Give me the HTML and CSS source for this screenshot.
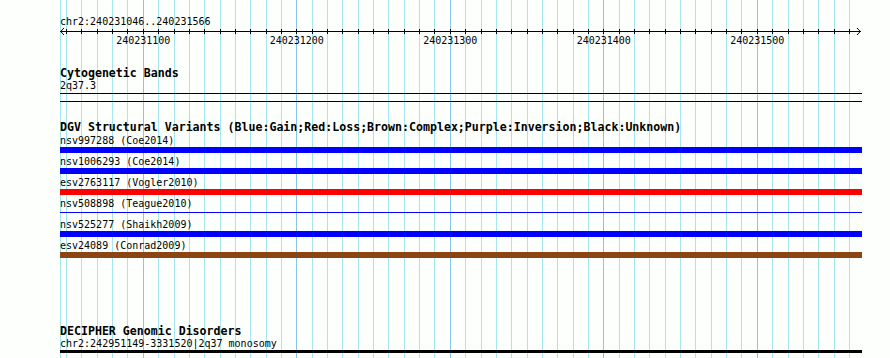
FILE: index.html
```html
<!DOCTYPE html>
<html lang="en">
<head>
    <meta charset="UTF-8">
    <title>Genome browser - chr2:240231046..240231566</title>
    <link rel="stylesheet" href="styles.css">
</head>
<body>
    <div class="panel">
        <!-- grid: a line every 10 bp, darker every 100 bp -->
        <svg class="grid" width="890" height="358" shape-rendering="crispEdges">
            <line class="minor" x1="60.5" x2="60.5" y1="0" y2="358"/>
            <line class="minor" x1="66.55" x2="66.55" y1="0" y2="358"/>
            <line class="minor" x1="81.9" x2="81.9" y1="0" y2="358"/>
            <line class="minor" x1="97.25" x2="97.25" y1="0" y2="358"/>
            <line class="minor" x1="112.6" x2="112.6" y1="0" y2="358"/>
            <line class="minor" x1="127.95" x2="127.95" y1="0" y2="358"/>
            <line class="major" x1="143.3" x2="143.3" y1="0" y2="358"/>
            <line class="minor" x1="158.65" x2="158.65" y1="0" y2="358"/>
            <line class="minor" x1="174" x2="174" y1="0" y2="358"/>
            <line class="minor" x1="189.35" x2="189.35" y1="0" y2="358"/>
            <line class="minor" x1="204.7" x2="204.7" y1="0" y2="358"/>
            <line class="minor" x1="220.05" x2="220.05" y1="0" y2="358"/>
            <line class="minor" x1="235.4" x2="235.4" y1="0" y2="358"/>
            <line class="minor" x1="250.75" x2="250.75" y1="0" y2="358"/>
            <line class="minor" x1="266.1" x2="266.1" y1="0" y2="358"/>
            <line class="minor" x1="281.45" x2="281.45" y1="0" y2="358"/>
            <line class="major" x1="296.8" x2="296.8" y1="0" y2="358"/>
            <line class="minor" x1="312.15" x2="312.15" y1="0" y2="358"/>
            <line class="minor" x1="327.5" x2="327.5" y1="0" y2="358"/>
            <line class="minor" x1="342.85" x2="342.85" y1="0" y2="358"/>
            <line class="minor" x1="358.2" x2="358.2" y1="0" y2="358"/>
            <line class="minor" x1="373.55" x2="373.55" y1="0" y2="358"/>
            <line class="minor" x1="388.9" x2="388.9" y1="0" y2="358"/>
            <line class="minor" x1="404.25" x2="404.25" y1="0" y2="358"/>
            <line class="minor" x1="419.6" x2="419.6" y1="0" y2="358"/>
            <line class="minor" x1="434.95" x2="434.95" y1="0" y2="358"/>
            <line class="major" x1="450.3" x2="450.3" y1="0" y2="358"/>
            <line class="minor" x1="465.65" x2="465.65" y1="0" y2="358"/>
            <line class="minor" x1="481" x2="481" y1="0" y2="358"/>
            <line class="minor" x1="496.35" x2="496.35" y1="0" y2="358"/>
            <line class="minor" x1="511.7" x2="511.7" y1="0" y2="358"/>
            <line class="minor" x1="527.05" x2="527.05" y1="0" y2="358"/>
            <line class="minor" x1="542.4" x2="542.4" y1="0" y2="358"/>
            <line class="minor" x1="557.75" x2="557.75" y1="0" y2="358"/>
            <line class="minor" x1="573.1" x2="573.1" y1="0" y2="358"/>
            <line class="minor" x1="588.45" x2="588.45" y1="0" y2="358"/>
            <line class="major" x1="603.8" x2="603.8" y1="0" y2="358"/>
            <line class="minor" x1="619.15" x2="619.15" y1="0" y2="358"/>
            <line class="minor" x1="634.5" x2="634.5" y1="0" y2="358"/>
            <line class="minor" x1="649.85" x2="649.85" y1="0" y2="358"/>
            <line class="minor" x1="665.2" x2="665.2" y1="0" y2="358"/>
            <line class="minor" x1="680.55" x2="680.55" y1="0" y2="358"/>
            <line class="minor" x1="695.9" x2="695.9" y1="0" y2="358"/>
            <line class="minor" x1="711.25" x2="711.25" y1="0" y2="358"/>
            <line class="minor" x1="726.6" x2="726.6" y1="0" y2="358"/>
            <line class="minor" x1="741.95" x2="741.95" y1="0" y2="358"/>
            <line class="major" x1="757.3" x2="757.3" y1="0" y2="358"/>
            <line class="minor" x1="772.65" x2="772.65" y1="0" y2="358"/>
            <line class="minor" x1="788" x2="788" y1="0" y2="358"/>
            <line class="minor" x1="803.35" x2="803.35" y1="0" y2="358"/>
            <line class="minor" x1="818.7" x2="818.7" y1="0" y2="358"/>
            <line class="minor" x1="834.05" x2="834.05" y1="0" y2="358"/>
            <line class="minor" x1="849.4" x2="849.4" y1="0" y2="358"/>
        </svg>

        <div class="tracks">
            <div class="label">chr2:240231046..240231566</div>

            <svg class="ruler" width="802" height="20" viewBox="60 28 802 20">
                <path class="axis" shape-rendering="crispEdges" d="M60 31.5H861"/>
                <path class="axis" d="M64 28L60.7 31.5L64 35M857 28L860.3 31.5L857 35"/>
                <path class="axis" shape-rendering="crispEdges" d="M66.55 29V34M81.9 29V34M97.25 29V34M112.6 29V34M127.95 29V34M143.3 29V34M158.65 29V34M174 29V34M189.35 29V34M204.7 29V34M220.05 29V34M235.4 29V34M250.75 29V34M266.1 29V34M281.45 29V34M296.8 29V34M312.15 29V34M327.5 29V34M342.85 29V34M358.2 29V34M373.55 29V34M388.9 29V34M404.25 29V34M419.6 29V34M434.95 29V34M450.3 29V34M465.65 29V34M481 29V34M496.35 29V34M511.7 29V34M527.05 29V34M542.4 29V34M557.75 29V34M573.1 29V34M588.45 29V34M603.8 29V34M619.15 29V34M634.5 29V34M649.85 29V34M665.2 29V34M680.55 29V34M695.9 29V34M711.25 29V34M726.6 29V34M741.95 29V34M757.3 29V34M772.65 29V34M788 29V34M803.35 29V34M818.7 29V34M834.05 29V34M849.4 29V34"/>
                <text class="tick-label" x="143.3" y="44">240231100</text>
                <text class="tick-label" x="296.8" y="44">240231200</text>
                <text class="tick-label" x="450.3" y="44">240231300</text>
                <text class="tick-label" x="603.8" y="44">240231400</text>
                <text class="tick-label" x="757.3" y="44">240231500</text>
            </svg>

            <section class="track cyto">
                <div class="title">Cytogenetic Bands</div>
                <div class="label">2q37.3</div>
                <div class="band"></div>
            </section>

            <section class="track dgv">
                <div class="title">DGV Structural Variants (Blue:Gain;Red:Loss;Brown:Complex;Purple:Inversion;Black:Unknown)</div>
                <div class="features">
                    <div class="feature">
                        <div class="label">nsv997288 (Coe2014)</div>
                        <div class="bar gain"></div>
                    </div>
                    <div class="feature">
                        <div class="label">nsv1006293 (Coe2014)</div>
                        <div class="bar gain"></div>
                    </div>
                    <div class="feature">
                        <div class="label">esv2763117 (Vogler2010)</div>
                        <div class="bar loss"></div>
                    </div>
                    <div class="feature">
                        <div class="label">nsv508898 (Teague2010)</div>
                        <div class="bar thin gain"></div>
                    </div>
                    <div class="feature">
                        <div class="label">nsv525277 (Shaikh2009)</div>
                        <div class="bar gain"></div>
                    </div>
                    <div class="feature">
                        <div class="label">esv24089 (Conrad2009)</div>
                        <div class="bar complex"></div>
                    </div>
                </div>
            </section>

            <section class="track decipher">
                <div class="title">DECIPHER Genomic Disorders</div>
                <div class="label">chr2:242951149-3331520|2q37 monosomy</div>
                <div class="bar disorder"></div>
            </section>
        </div>
    </div>
</body>
</html>
```

FILE: styles.css
```css
body {
    margin: 0;
    padding: 0;
    background-color: #fcfffc;
    font-family: "DejaVu Sans Mono", "Liberation Mono", monospace;
    color: #000;
}
.panel {
    position: relative;
    width: 890px;
    height: 358px;
    overflow: hidden;
}
.grid {
    position: absolute;
    left: 0;
    top: 0;
}
.grid line {
    stroke-width: 1;
}
.grid .minor {
    stroke: #a6e6ee;
}
.grid .major {
    stroke: #86c6ea;
}
.tracks {
    position: relative;
    display: flex;
    flex-direction: column;
    width: 802px;
    margin-left: 60px;
    padding-top: 16px;
}
.label {
    font-size: 10px;
    line-height: 12px;
    height: 12px;
    white-space: nowrap;
}
.title {
    font-size: 11.6px;
    font-weight: bold;
    line-height: 13px;
    height: 13px;
    white-space: nowrap;
}
.ruler {
    display: block;
}
.ruler .axis {
    fill: none;
    stroke: #000;
    stroke-width: 1;
}
.tick-label {
    font-family: "DejaVu Sans Mono", "Liberation Mono", monospace;
    font-size: 10px;
    text-anchor: middle;
    fill: #000;
}
.track {
    display: flex;
    flex-direction: column;
}
.cyto {
    margin-top: 19px;
}
.band {
    height: 7px;
    margin-top: 1px;
    border-top: 1px solid #000;
    border-bottom: 1px solid #000;
}
.dgv {
    margin-top: 19px;
}
.features {
    display: flex;
    flex-direction: column;
    margin-top: 1px;
}
.feature {
    display: flex;
    flex-direction: column;
    margin-bottom: 3px;
}
.feature:last-child {
    margin-bottom: 0;
}
.bar {
    height: 6px;
}
.bar.thin {
    height: 1px;
    margin: 2px 0 3px;
}
.gain {
    background-color: #0000ff;
}
.loss {
    background-color: #ff0000;
}
.complex {
    background-color: #8b4513;
}
.decipher {
    margin-top: 67px;
}
.disorder {
    height: 3px;
    background-color: #000;
}
```
